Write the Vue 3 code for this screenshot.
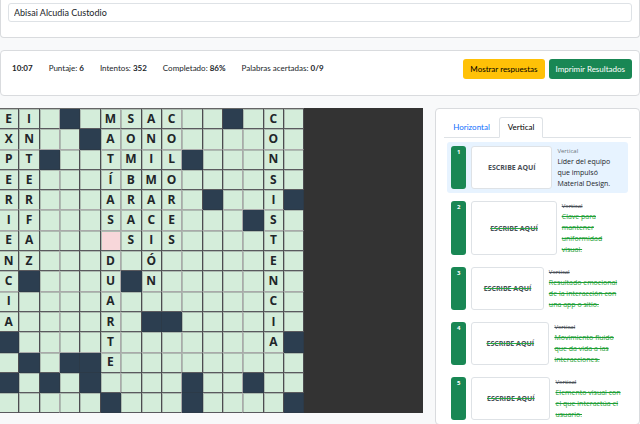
<template>
  <div class="page">
    <section class="card user-card">
      <input v-model="userName" class="name-input" type="text" aria-label="Nombre" />
    </section>

    <section class="card stats-card">
      <div class="stats">
        <strong>{{ time }}</strong>
        <span v-for="stat in stats" :key="stat.label">
          {{ stat.label }}: <strong>{{ stat.value }}</strong>
        </span>
      </div>
      <div class="actions">
        <button type="button" class="btn btn-warning">Mostrar respuestas</button>
        <button type="button" class="btn btn-success">Imprimir Resultados</button>
      </div>
    </section>

    <main class="game">
      <div class="board">
        <div class="grid">
          <div
            v-for="cell in cells"
            :key="cell.id"
            class="cell"
            :class="{
              blocked: cell.char === '#',
              wrong: cell.char === '!',
              'soft-right': cell.softRight,
              'soft-bottom': cell.softBottom,
            }"
          >{{ cell.letter }}</div>
        </div>
      </div>

      <aside class="card clues">
        <div class="tabs" role="tablist">
          <button
            v-for="tab in tabs"
            :key="tab"
            type="button"
            role="tab"
            class="tab"
            :class="{ active: tab === activeTab }"
            :aria-selected="tab === activeTab"
            @click="activeTab = tab"
          >
            {{ tab }}
          </button>
        </div>
        <ul class="clue-list">
          <li
            v-for="clue in clues"
            :key="clue.number"
            class="clue"
            :class="{ selected: clue.number === selected, done: clue.done }"
          >
            <span class="badge">{{ clue.number }}</span>
            <button type="button" class="answer" @click="selected = clue.number">ESCRIBE AQUÍ</button>
            <div class="clue-text">
              <small>Vertical</small>
              <p>{{ clue.text }}</p>
            </div>
          </li>
        </ul>
      </aside>
    </main>
  </div>
</template>

<script setup>
import { ref } from 'vue'

const userName = ref('Abisai Alcudia Custodio')
const time = ref('10:07')

const stats = [
  { label: 'Puntaje', value: '6' },
  { label: 'Intentos', value: '352' },
  { label: 'Completado', value: '86%' },
  { label: 'Palabras acertadas', value: '0/9' },
]

const tabs = ['Horizontal', 'Vertical']
const activeTab = ref('Vertical')
const selected = ref(1)

// # = blocked cell, ! = wrong answer, . = empty
const rows = [
  'EI.#.MSAC..#.C.',
  'XN..#AONO....O.',
  'PT#..TMIL#...N.',
  'EE...ÍBMO....S.',
  'RR...ARAR.#..I#',
  'IF...SACE...#S.',
  'EA...!SIS....T.',
  'NZ...D.Ó.....E.',
  'C#...U#N.....N.',
  'I....A.......C.',
  'A....R.##....I.',
  '#....T.......A#',
  '.#.##E.........',
  '#.#.#....#..#..',
  '.....#...#....#',
]

const softColumns = [2, 5, 8, 11]
const softRows = [1, 4, 5, 8, 11]

const cells = rows.flatMap((row, y) =>
  [...row].map((char, x) => ({
    id: `${y}-${x}`,
    char,
    letter: '#!.'.includes(char) ? '' : char,
    softRight: softColumns.includes(x),
    softBottom: softRows.includes(y),
  }))
)

const clues = [
  { number: 1, done: false, text: 'Líder del equipo que impulsó Material Design.' },
  { number: 2, done: true, text: 'Clave para mantener uniformidad visual.' },
  { number: 3, done: true, text: 'Resultado emocional de la interacción con una app o sitio.' },
  { number: 4, done: true, text: 'Movimiento fluido que da vida a las interacciones.' },
  { number: 5, done: true, text: 'Elemento visual con el que interactúa el usuario.' },
]
</script>

<style>
body {
  background: #f8f9fa;
  overflow: hidden;
}
</style>

<style scoped>
.page {
  height: 100vh;
  overflow: hidden;
  color: #212529;
  font-family: Lato, "Open Sans", sans-serif;
  font-size: 8px;
  line-height: 11px;
}

.card {
  box-sizing: border-box;
  background: #fff;
  border: 1px solid #d9dbde;
  border-radius: 4px;
}

.user-card {
  padding: 3px 7px 15px;
  border-top: 0;
  border-radius: 0 0 4px 4px;
}

.name-input {
  display: block;
  box-sizing: border-box;
  width: 100%;
  height: 19px;
  padding: 0 5px;
  border: 1px solid #dee2e6;
  border-radius: 3px;
  color: #212529;
  font: inherit;
  font-size: 9px;
}

.stats-card {
  display: flex;
  justify-content: space-between;
  align-items: flex-start;
  margin-top: 12px;
  padding: 8px 7px 16px 11px;
}

.stats {
  display: flex;
  gap: 16px;
  padding-top: 4px;
}

.actions {
  display: flex;
  gap: 4px;
}

.btn {
  height: 20px;
  padding: 0 7px;
  border: 0;
  border-radius: 3px;
  font: inherit;
  cursor: pointer;
}

.btn-warning {
  background: #ffc107;
  color: #000;
}

.btn-success {
  background: #198754;
  color: #fff;
}

.game {
  display: flex;
  align-items: flex-start;
  gap: 12px;
  margin-top: 12px;
}

.board {
  flex: 1;
  margin-left: -1px;
  background: #333;
}

.grid {
  display: grid;
  box-sizing: border-box;
  grid-template-columns: repeat(15, 1fr);
  grid-auto-rows: 1fr;
  width: 72%;
  aspect-ratio: 1;
  border-top: 1px solid #666;
  font-family: "Open Sans", sans-serif;
}

.cell {
  display: flex;
  align-items: center;
  justify-content: center;
  min-width: 0;
  min-height: 0;
  background: #d4edda;
  border-right: 1px solid #4c4c50;
  border-bottom: 1px solid #5a5a5e;
  box-shadow: inset 1px 1px 0 #adbbb1;
  font-size: 12px;
  font-weight: 700;
  line-height: 12px;
}

.soft-right { border-right-color: #aaa; }
.soft-bottom { border-bottom-color: #aaa; }
.cell.wrong { background: #f8d7da; }

.cell.blocked {
  background: #2c3e50;
  border-color: #2c3a48;
  box-shadow: none;
}

.clues {
  flex: 0 0 32%;
  padding: 8px 8px 0;
}

.tabs {
  display: flex;
  border-bottom: 1px solid #dee2e6;
}

.tab {
  height: 21px;
  margin-bottom: -1px;
  padding: 0 8px;
  background: none;
  border: 1px solid transparent;
  border-radius: 3px 3px 0 0;
  color: #0d6efd;
  font: inherit;
  cursor: pointer;
}

.tab.active {
  background: #fff;
  border-color: #dee2e6 #dee2e6 #fff;
  color: #000;
}

.clue-list {
  display: flex;
  flex-direction: column;
  gap: 4px;
  margin: 4px 3px 0;
  padding: 0;
  list-style: none;
  font-family: "Open Sans", sans-serif;
}

.clue {
  display: flex;
  gap: 5px;
  padding: 4px;
  border-radius: 3px;
}

.clue.selected { background: #e7f3ff; }

.badge {
  box-sizing: border-box;
  flex: 0 0 15px;
  padding-top: 2px;
  background: #198754;
  border-radius: 3px;
  color: #fff;
  font-size: 6px;
  font-weight: 700;
  line-height: 8px;
  text-align: center;
}

.answer {
  flex: 0 1 180px;
  box-sizing: border-box;
  min-width: 0;
  padding: 0;
  background: #fff;
  border: 1px solid #dee2e6;
  border-radius: 3px;
  color: #495057;
  font: inherit;
  font-size: 7px;
  font-weight: 700;
  cursor: text;
}

.clue-text {
  flex: 0 1 auto;
  min-width: 0;
}

.clue-text small {
  display: block;
  color: #6c757d;
  font-size: 6px;
  line-height: 10px;
}

.clue-text p {
  margin: 0;
  font-size: 7px;
}

.done .answer { text-decoration: line-through #28a745; }

.done small {
  color: #495057;
  text-decoration: line-through;
}

.done p {
  color: #1fa037;
  text-decoration: line-through;
}
</style>
